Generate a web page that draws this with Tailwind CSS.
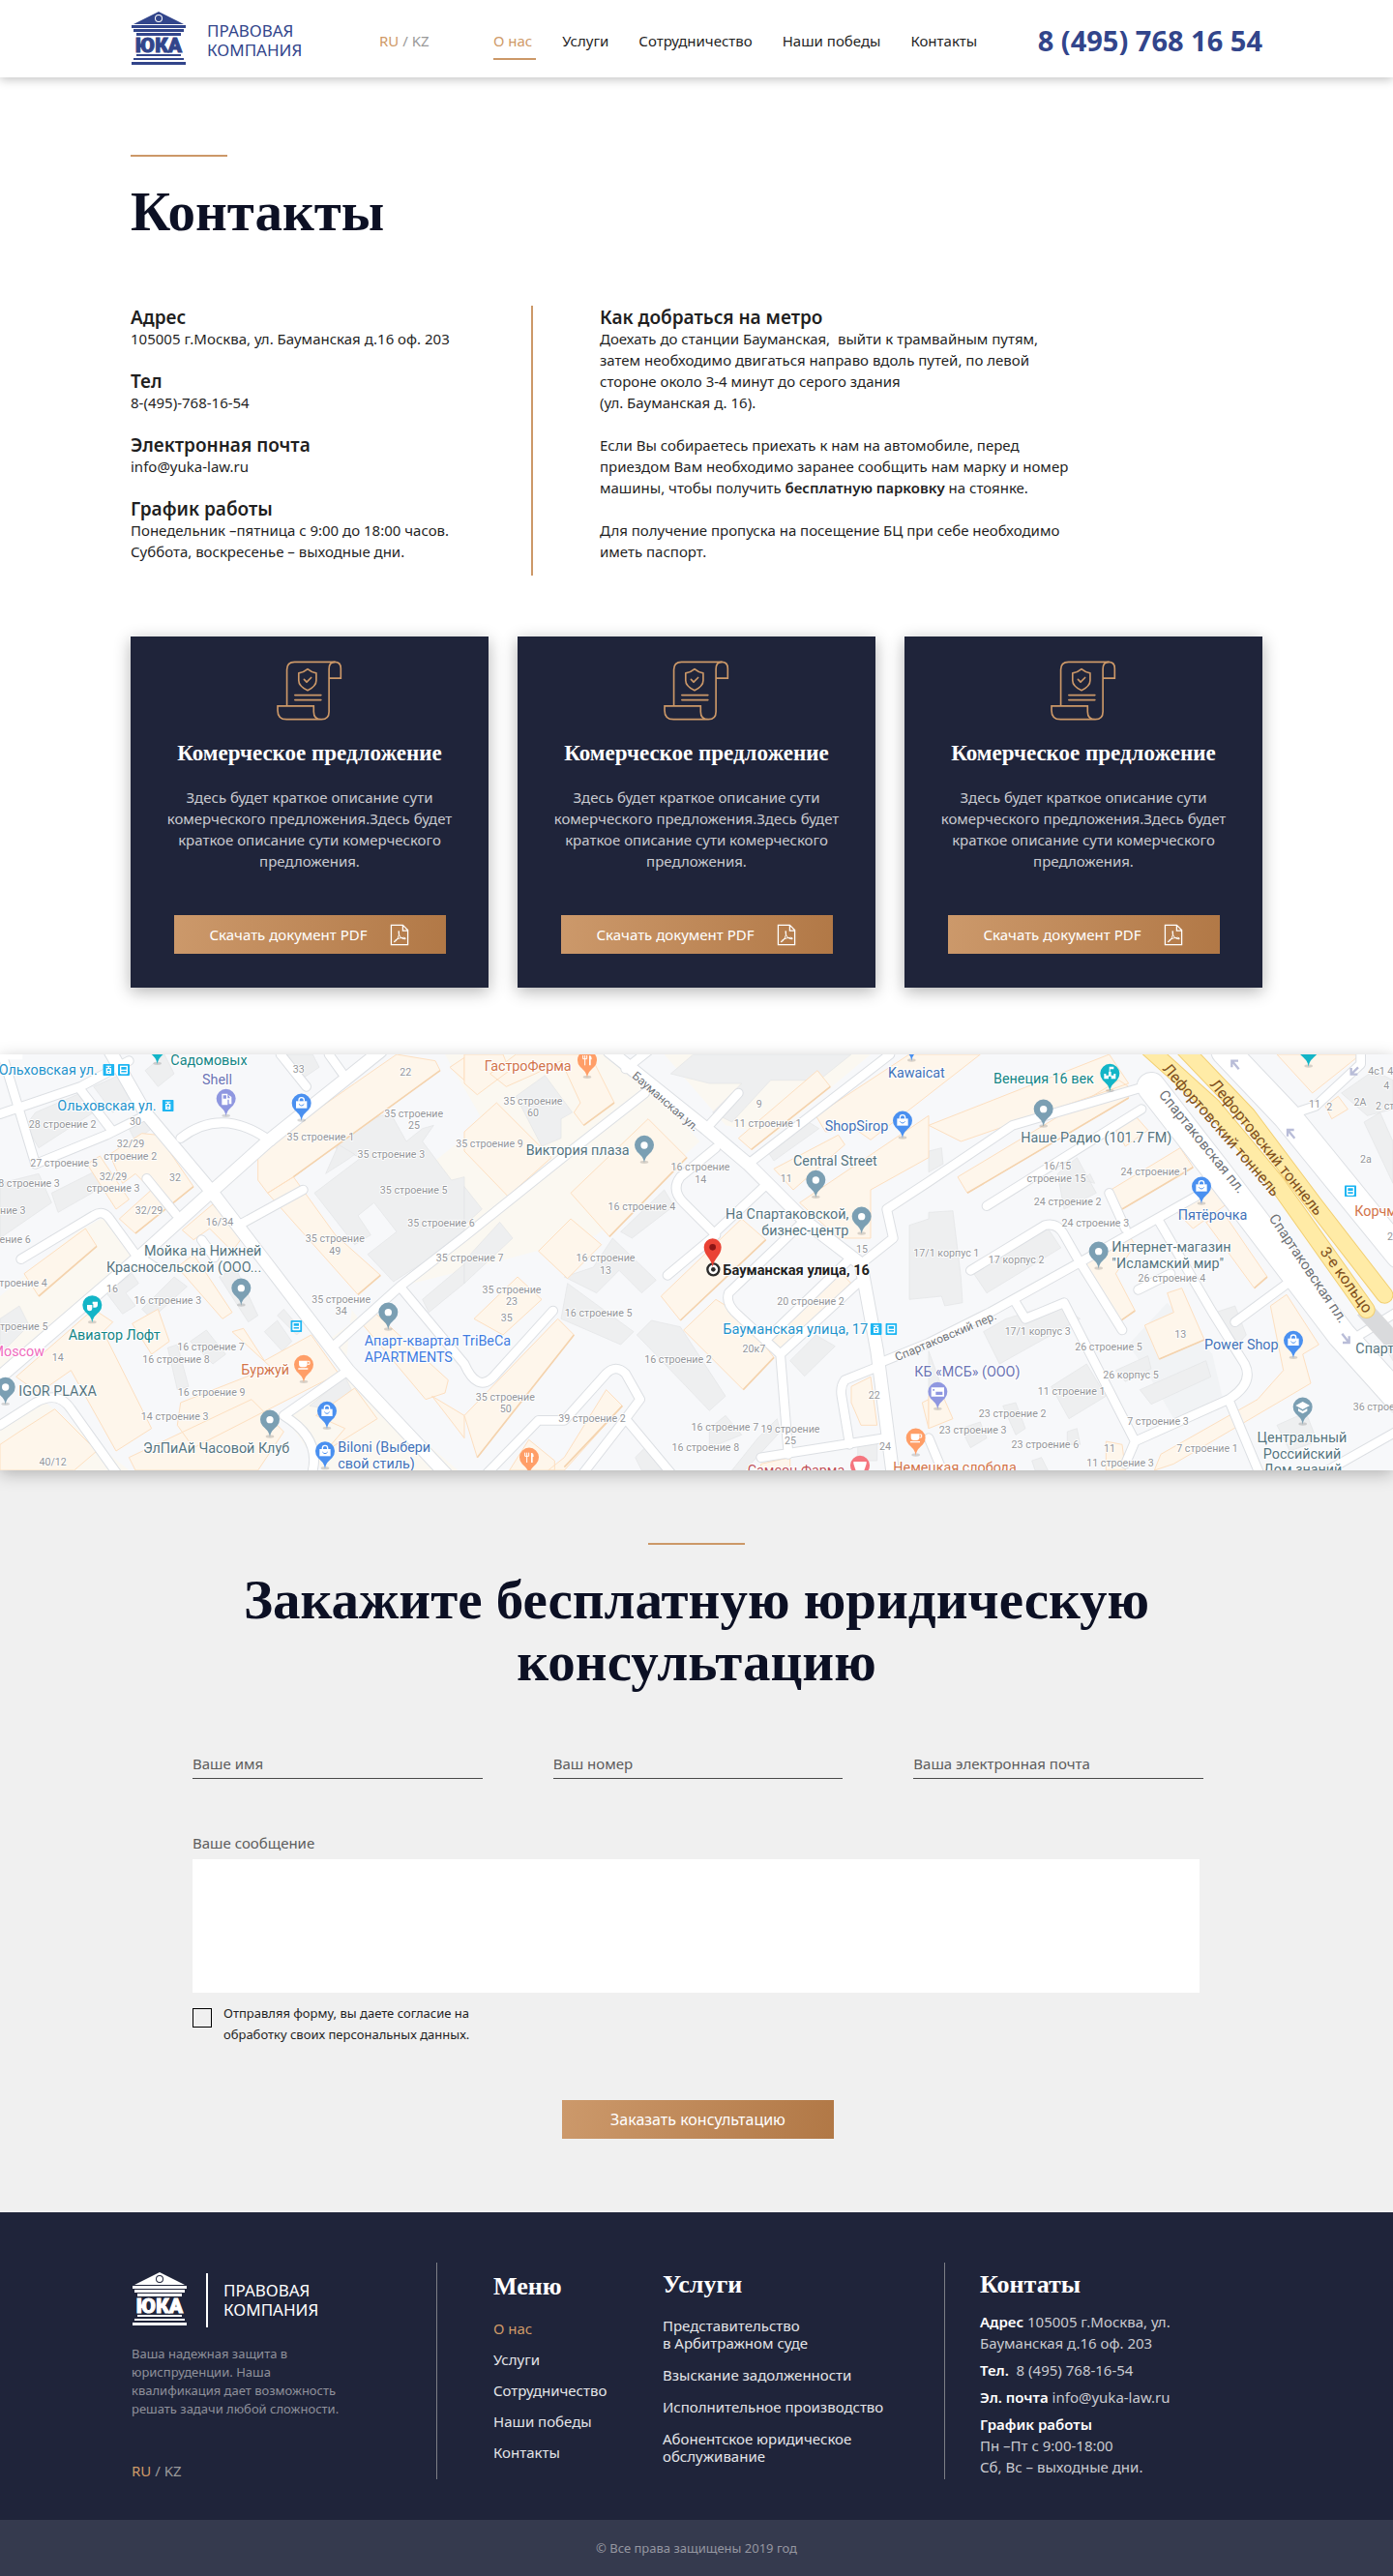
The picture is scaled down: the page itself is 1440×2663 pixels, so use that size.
<!DOCTYPE html>
<html lang="ru">
<head>
<meta charset="utf-8">
<meta name="viewport" content="width=device-width, initial-scale=1">
<title>Контакты — Правовая компания ЮКА</title>
<script src="https://cdn.jsdelivr.net/npm/@tailwindcss/browser@4"></script>
</head>
<body class="bg-white font-['Noto_Sans',sans-serif] text-[15px] leading-[22px] text-[#1f1f1f]">

<!-- shared symbols -->
<svg class="hidden" aria-hidden="true">
  <symbol id="logo" viewBox="0 0 56 55">
    <path fill="currentColor" fill-rule="evenodd" d="M28 0L54 13H2ZM28 3A4 4 0 1 0 28 11A4 4 0 1 0 28 3ZM28 4A3 3 0 1 1 28 10A3 3 0 1 1 28 4Z"/>
    <path fill="currentColor" d="M0 14H56V17H0ZM2 18H54V21H2ZM5 22H51V25H5ZM5 44H51V46H5ZM2 48H54V50H2ZM0 52H56V55H0Z"/>
    <text x="28" y="42" text-anchor="middle" fill="currentColor" stroke="currentColor" stroke-width="1" class="font-[Roboto,sans-serif] text-[21px] font-black">ЮКА</text>
  </symbol>
  <symbol id="scroll" viewBox="498 128 206 188">
    <g fill="none" stroke="#cc9868" stroke-width="5" stroke-linejoin="round" stroke-linecap="round">
      <path d="M530 268V156Q530 132 554 132H680"/>
      <path stroke-linejoin="miter" d="M664 183H699V152Q699 132 680 132Q662 132 662 154V288Q662 312 638 312Q614 312 614 288V270H501V284Q501 312 529 312H638"/>
      <path d="M595 154Q582 165 567 167V190Q567 208 595 221Q622 208 622 190V167Q608 165 595 154Z"/>
      <path d="M584 187L592 195L606 181M555 236H637M555 251H637"/>
    </g>
  </symbol>
  <symbol id="pdf" viewBox="856 943 61 71">
    <g fill="none" stroke="#fff" stroke-width="4">
      <path d="M860 947H897L913 963V1010H860ZM897 947V965H913"/>
      <path stroke-width="3" d="M884 966Q882 976 888 984Q895 992 905 992Q908 988 901 987Q889 987 878 992Q868 998 869 1001Q875 1001 881 989Q888 975 884 966Z"/>
    </g>
  </symbol>
  <symbol id="pin" viewBox="-32 -32 64 90" overflow="visible">
    <ellipse cx="0" cy="52" rx="13" ry="5" fill="#000" opacity=".15"/>
    <path fill="currentColor" d="M0 54C-3 34 -14 29 -22 20A30 30 0 1 1 22 20C14 29 3 34 0 54Z"/>
  </symbol>
  <symbol id="bag" viewBox="-32 -32 64 90" overflow="visible">
    <use href="#pin" x="-32" y="-32" width="64" height="90"/>
    <path fill="#fff" d="M-17 -7H17V15H-17Z"/><path fill="none" stroke="#fff" stroke-width="4" d="M-8 -6V-10A8 8 0 0 1 8 -10V-6"/><path fill="none" stroke="#4a90f0" stroke-width="3" d="M-8 2Q0 12 8 2"/>
  </symbol>
  <symbol id="dot" viewBox="-32 -32 64 90" overflow="visible">
    <use href="#pin" x="-32" y="-32" width="64" height="90"/><circle r="11" fill="#fff"/>
  </symbol>
  <symbol id="fork" viewBox="-32 -32 64 90" overflow="visible">
    <use href="#pin" x="-32" y="-32" width="64" height="90"/>
    <path fill="none" stroke="#fff" stroke-width="3" d="M-13 -15V-4H-1V-15M-7 -15V16"/><path fill="#fff" d="M6 16V-14Q14 -16 14 -2H11V16Z"/>
  </symbol>
  <symbol id="cup" viewBox="-32 -32 64 90" overflow="visible">
    <use href="#pin" x="-32" y="-32" width="64" height="90"/>
    <path fill="#fff" d="M-15 -13H11V-2Q11 7 2 7H-6Q-15 7 -15 -2ZM-17 10H13V14H-17Z"/><path fill="none" stroke="#fff" stroke-width="3" d="M11 -11H18V-2H11"/>
  </symbol>
  <symbol id="stop" viewBox="0 0 36 36">
    <rect width="36" height="36" rx="3" fill="#1fb6f2"/><path fill="none" stroke="#fff" stroke-width="4" d="M8 7H28V28H8ZM8 19H28"/><path fill="#fff" d="M8 26H28V31H8Z"/>
  </symbol>
  <symbol id="tram" viewBox="0 0 36 36">
    <rect width="36" height="36" rx="3" fill="#1fb6f2"/><path fill="#fff" d="M10 5H26V8H20V12H26V30H10V12H16V8H10Z"/><path fill="#1fb6f2" d="M14 16H22V21H14ZM16 24H20V27H16Z"/>
  </symbol>
</svg>

<header class="relative z-10 bg-white px-5 shadow-[0_2px_10px_rgba(0,0,0,0.25)]">
  <div class="mx-auto flex h-20 max-w-[1170px] items-center pt-1">
    <a href="#" class="flex w-[257px] items-center gap-[22px] pl-px text-[17px] leading-5 text-[#32458b]">
      <svg class="mb-1.5 h-[55px] w-14 shrink-0"><use href="#logo"/></svg>
      <span>ПРАВОВАЯ<br>КОМПАНИЯ</span>
    </a>
    <div class="w-[118px] text-[#9a9a9a]"><a href="#" class="text-[#cf9a68]">RU</a> / <a href="#">KZ</a></div>
    <nav class="flex gap-[31px]">
      <a href="#" class="-mr-1 border-b-2 border-[#cc9868] pt-[9px] pr-1 pb-[7px] text-[#cf9a68]">О нас</a>
      <a href="#" class="border-b-2 border-transparent pt-[9px] pb-[7px]">Услуги</a>
      <a href="#" class="border-b-2 border-transparent pt-[9px] pb-[7px]">Сотрудничество</a>
      <a href="#" class="border-b-2 border-transparent pt-[9px] pb-[7px]">Наши победы</a>
      <a href="#" class="border-b-2 border-transparent pt-[9px] pb-[7px]">Контакты</a>
    </nav>
    <a href="tel:+74957681654" class="ml-auto text-[29px] font-bold whitespace-nowrap text-[#32458b]">8 (495) 768 16 54</a>
  </div>
</header>

<main>
  <div class="px-5 pt-20 pb-[69px]">
    <div class="mx-auto max-w-[1170px]">
      <div class="h-0.5 w-[100px] bg-[#cc9868]"></div>
      <h1 class="mt-[25px] font-['Liberation_Serif',serif] text-[57px] leading-16 font-bold text-[#0c1024]">Контакты</h1>

      <section class="mt-[65px] flex">
        <dl class="w-[414px] shrink-0 pt-px">
          <dt class="text-[19px] leading-[22px] font-semibold">Адрес</dt>
          <dd class="mb-[22px]">105005 г.Москва, ул. Бауманская д.16 оф. 203</dd>
          <dt class="text-[19px] leading-[22px] font-semibold">Тел</dt>
          <dd class="mb-[22px]">8-(495)-768-16-54</dd>
          <dt class="text-[19px] leading-[22px] font-semibold">Электронная почта</dt>
          <dd class="mb-[22px]">info@yuka-law.ru</dd>
          <dt class="text-[19px] leading-[22px] font-semibold">График работы</dt>
          <dd>Понедельник –пятница с 9:00 до 18:00 часов.<br>Суббота, воскресенье – выходные дни.</dd>
        </dl>
        <div class="border-l-2 border-[#cc9868] pt-px pb-[14px] pl-[69px]">
          <h2 class="text-[19px] leading-[22px] font-semibold">Как добраться на метро</h2>
          <p>Доехать до станции Бауманская,&nbsp; выйти к трамвайным путям,<br>затем необходимо двигаться направо вдоль путей, по левой<br>стороне около 3-4 минут до серого здания<br>(ул. Бауманская д. 16).</p>
          <p class="mt-[22px]">Если Вы собираетесь приехать к нам на автомобиле, перед<br>приездом Вам необходимо заранее сообщить нам марку и номер<br>машины, чтобы получить <b class="font-semibold">бесплатную парковку</b> на стоянке.</p>
          <p class="mt-[22px]">Для получение пропуска на посещение БЦ при себе необходимо<br>иметь паспорт.</p>
        </div>
      </section>

      <section class="mt-[63px] grid grid-cols-3 gap-[30px] text-center">
        <article class="flex flex-col items-center bg-[#1f243a] px-[35px] pt-[25px] pb-[35px] shadow-[0_4px_16px_rgba(0,0,0,0.3)]">
          <svg class="h-[62px] w-[68px]"><use href="#scroll"/></svg>
          <h3 class="mt-5 font-['Liberation_Serif',serif] text-[23px] leading-7 font-bold whitespace-nowrap text-white">Комерческое предложение</h3>
          <p class="mt-5 text-[#c9cad0]">Здесь будет краткое описание сути комерческого предложения.Здесь будет краткое описание сути комерческого предложения.</p>
          <button type="button" class="mt-[45px] flex h-10 w-[281px] items-center justify-center gap-6 bg-linear-100 from-[#cc996b] to-[#b17846] text-white">Скачать документ PDF <svg class="h-[23px] w-5"><use href="#pdf"/></svg></button>
        </article>
        <article class="flex flex-col items-center bg-[#1f243a] px-[35px] pt-[25px] pb-[35px] shadow-[0_4px_16px_rgba(0,0,0,0.3)]">
          <svg class="h-[62px] w-[68px]"><use href="#scroll"/></svg>
          <h3 class="mt-5 font-['Liberation_Serif',serif] text-[23px] leading-7 font-bold whitespace-nowrap text-white">Комерческое предложение</h3>
          <p class="mt-5 text-[#c9cad0]">Здесь будет краткое описание сути комерческого предложения.Здесь будет краткое описание сути комерческого предложения.</p>
          <button type="button" class="mt-[45px] flex h-10 w-[281px] items-center justify-center gap-6 bg-linear-100 from-[#cc996b] to-[#b17846] text-white">Скачать документ PDF <svg class="h-[23px] w-5"><use href="#pdf"/></svg></button>
        </article>
        <article class="flex flex-col items-center bg-[#1f243a] px-[35px] pt-[25px] pb-[35px] shadow-[0_4px_16px_rgba(0,0,0,0.3)]">
          <svg class="h-[62px] w-[68px]"><use href="#scroll"/></svg>
          <h3 class="mt-5 font-['Liberation_Serif',serif] text-[23px] leading-7 font-bold whitespace-nowrap text-white">Комерческое предложение</h3>
          <p class="mt-5 text-[#c9cad0]">Здесь будет краткое описание сути комерческого предложения.Здесь будет краткое описание сути комерческого предложения.</p>
          <button type="button" class="mt-[45px] flex h-10 w-[281px] items-center justify-center gap-6 bg-linear-100 from-[#cc996b] to-[#b17846] text-white">Скачать документ PDF <svg class="h-[23px] w-5"><use href="#pdf"/></svg></button>
        </article>
      </section>
    </div>
  </div>

  <section class="relative z-10 h-[430px] shadow-[0_4px_16px_rgba(0,0,0,0.25)]" aria-label="Карта">
    <svg class="block h-full w-full bg-[#f7f8fa] font-[Roboto,sans-serif]" viewBox="0 30 4320 1290" preserveAspectRatio="xMidYMid slice" role="img" aria-label="Бауманская улица, 16">
      <!-- commercial ground -->
      <path fill="#fbf8f1" d="M240 580L330 530L420 660L0 1010V780ZM0 1180L130 1100L400 1320H0ZM1180 30H1930L2170 300L1850 590L1440 700L1240 750L1000 930L1060 1010L1420 1320H1000L880 1150L1070 1010ZM2060 30H2700L2400 280L2250 250Z"/>
      <path fill="#f7f8fa" d="M1180 30L830 310L800 440L1120 860L1440 600L1300 400L1500 240L1380 30Z"/>
      <path fill="#f1f3f5" d="M3500 930L3620 800L3760 960L3790 1090L3640 1160L3560 1020Z"/>
      <!-- grey buildings -->
      <g fill="#eeeff0" stroke="#e3e4e6" stroke-width="2">
        <path d="M110 210L250 150L290 210L120 320L80 250ZM290 130L380 90L410 160L350 210ZM390 240L450 210L470 260L420 300ZM860 30H970L990 70L930 110ZM450 80L510 30L540 90L490 130Z"/>
        <path d="M0 430L120 400L160 490L0 600ZM160 460L300 390L320 440L180 520ZM0 850L60 810L90 870L0 960ZM330 770L410 710L430 740L390 770L420 810L380 835ZM440 820L540 720L580 750L470 850Z"/>
        <path d="M680 720L730 690L800 840L770 860ZM820 890L860 855L905 920L875 950ZM860 840L880 820L935 885L920 900ZM590 920L640 885L700 960L660 990ZM520 940L550 930L585 1060L550 1070ZM960 1120L1070 1030L1090 1070L1020 1130Z"/>
        <path d="M975 460L1120 350L1040 320L1130 240L1210 210L1260 300L1310 260L1345 250L1310 300L1400 420L1440 410V600L1290 690L1220 735L1140 650L1230 580L1160 490L1110 530L1150 590L1100 620ZM1310 790L1440 680V740L1330 830Z"/>
        <path d="M1600 160L1690 95L1775 210L1740 230L1740 290L1680 315ZM1440 440L1495 510L1440 560ZM1440 670L1550 550L1590 600L1440 740ZM1840 690L1900 600L2035 730L1990 770L1920 700L1850 770L1750 720ZM1760 740L1965 890L1925 930L1740 850ZM1975 900L2020 855L2110 875L2250 1090L2200 1135ZM1925 580L2060 450L2090 500L1960 600Z"/>
        <path d="M2080 90L2150 30H2640L2540 110L2480 110L2390 110L2270 240L2210 210L2300 120L2200 120ZM2380 330L2500 235L2540 260L2400 360ZM2450 980L2530 900L2590 935L2495 1028ZM2200 1190L2250 1150L2300 1210L2200 1250ZM2350 1220L2410 1160L2420 1200L2310 1320H2270ZM2660 1220H2720V1290H2660ZM1970 1280L2010 1240L2060 1320H1990Z"/>
        <path d="M2880 330L2920 320L2925 370L2880 395ZM2820 560L2880 540V520L2955 515L2980 720L2985 800L2930 810L2920 780L2820 790ZM3020 710L3250 570L3290 630L3060 770ZM3050 890L3120 850L3280 800L3350 850L3100 990ZM3280 400L3340 350L3400 460L3300 510ZM3360 420L3380 400L3395 430ZM3260 1060L3370 990L3430 1090L3315 1160ZM3460 1010L3560 965L3570 1005L3490 1045ZM3535 1070L3740 980L3755 1030L3570 1115ZM3770 830L3830 810L3865 900L3830 940ZM3960 1180L4050 1140L4085 1230L4000 1260Z"/>
        <path d="M4160 150L4260 80L4320 110V200L4240 220ZM4230 240L4280 210L4320 300V430ZM3110 1120L3150 1110L3180 1190L3150 1210ZM2980 1190L3040 1170L3060 1220L3010 1250ZM3310 1200L3340 1190L3350 1240L3310 1240ZM3200 1290L3230 1280L3250 1320H3210ZM2880 950L2920 1060L2880 1120ZM4290 930L4320 900V980ZM1010 400L1050 310L1100 340L1080 355Z"/>
      </g>
      <!-- orange buildings -->
      <g fill="#fef6eb" stroke="#fddfc0" stroke-width="3">
        <path d="M1100 120L1230 30L1350 50L1365 80L910 410L830 460L800 420V330ZM830 460L910 410L1040 590L1180 715L1110 775ZM340 340L440 275L490 280L600 440L420 585L370 540L470 450L420 400L380 430ZM270 370L310 345L400 480L360 510ZM565 575L660 495L750 600L720 640L650 570L600 605ZM550 690L600 650L720 830L690 850Z"/>
        <path d="M75 710L265 570L300 625L120 780ZM50 1030L290 820L350 860L320 890L470 1190L360 1260L220 1010L120 1080ZM410 865L490 820L525 920L470 960ZM720 890L755 880L820 980L965 900L1050 1020L600 1250L550 1180L560 1110L840 1000ZM60 1200L170 1130L300 1260L230 1320H0V1240ZM980 1150L1100 1065L1170 1160L1010 1260L1070 1190ZM400 1280L780 1100L880 1200L800 1320H420ZM1110 850L1150 820L1390 1040L1380 1080L1320 1100ZM1395 70L1440 40V110ZM1440 1220L1340 1090L1440 1150Z"/>
        <path d="M1440 30H1560L1580 80L1480 155L1440 120ZM1440 270L1540 180L1710 350L1575 470L1440 330ZM1770 460L2010 230L2130 350L1890 595ZM1670 640L1770 540L1865 620L1760 725ZM1470 850L1605 720L1680 790L1560 900ZM1520 90L1600 30H1830L1905 180L1810 250L1780 210L1800 180L1740 50L1660 90L1570 130ZM1440 1150L1730 850L1780 900L1480 1280ZM1750 1280L1880 1070L1930 1120L1750 1320H1700ZM1580 1320L1640 1225L1720 1290V1320Z"/>
        <path d="M2050 780L2300 540L2375 605L2110 855ZM2120 885L2220 790L2300 840L2400 970L2305 1070ZM2380 910L2600 700L2640 740L2420 960ZM2290 290L2535 80L2575 130L2330 325ZM2400 385L2600 280L2620 310L2460 450ZM2480 490L2880 220V350L2700 450L2700 600L2600 600ZM2530 220L2820 30H3040L2700 295L2650 260L2560 270ZM2640 1060L2700 1030L2720 1180L2670 1180L2640 1110ZM2860 1110L2880 1100V1190ZM2360 1300L2450 1280V1320H2360Z"/>
        <path d="M2880 250L3440 30L3500 120L2980 300ZM2970 410L3470 110L3500 130L3500 165L3000 460ZM3455 255L3520 220L3560 265L3490 315ZM3445 450L3660 320L3700 380L3480 510ZM3350 680L3380 650L3500 590L3520 620L3460 710L3520 825L3470 860ZM3640 510L3770 420L3810 490L3700 570ZM3740 550L3800 530L3930 720L3890 755ZM3550 870L3640 830L3620 770L3665 755L3735 915L3595 975ZM3940 810L3990 775L4090 930L4040 960L4065 1050L3640 1300L3580 1320L3600 1270L3900 1100L3980 1010ZM2880 1090L2920 1080L2955 1160L2880 1190ZM3430 1230L3480 1240L3490 1320H3430ZM3960 30H4220L4070 150ZM4110 190L4150 160L4180 200L4130 230Z"/>
      </g>
      <g fill="none" stroke="#f4d3ae" stroke-width="5">
        <path d="M1365 80L910 410M1180 715L1110 775M600 440L420 585M300 625L120 780M2130 350L1890 595M1905 180L1810 250M1780 900L1480 1280M1930 1120L1750 1310M2375 605L2110 855M2400 970L2305 1070M2640 740L2420 960M3500 165L3000 460M3700 380L3480 510M3520 825L3470 860M3930 720L3890 755M3735 915L3595 975M2575 130L2330 325"/>
      </g>
      <!-- streets: casing, then surface -->
      <g fill="none" stroke="#dcdfe3" stroke-linecap="round" stroke-linejoin="round">
        <path stroke-width="44" d="M330 0L450 210L660 460L1080 1010L1400 1350M0 1030L430 660L640 470L830 300L1180 20M1890 20L2190 260L2320 370L2500 550L2670 680L2720 950L2770 1340"/>
        <path stroke-width="32" d="M0 215L250 130L400 50M10 40L110 370L330 280L450 220M250 140L350 270M560 290Q690 190 840 300M65 665L290 530Q320 510 340 540L420 650L480 690M740 560L940 450M1040 930L1240 750L1440 595L1770 330L2000 150M1240 750L1440 990Q1480 1080 1530 1030L1715 825M880 1150L1080 1010M880 1150Q1010 1230 960 1350M0 1180L110 1110Q180 1070 220 1130L370 1340M455 415L545 525M625 605L665 660M870 30L950 130M1020 30L1070 100"/>
        <path stroke-width="32" d="M1940 75L2010 20M2190 260L2290 150M2220 320L2110 410Q2080 450 2120 490L2220 590L2070 715M2220 580L2370 440M2320 370L2540 200L2760 30M2490 550L2260 770Q2250 800 2280 830L2420 960L2445 1270M2420 960L2660 740M2380 910L2640 660M2670 680L2770 600L2750 510L2880 425L3140 250L3550 130M2720 1000L2620 1040Q2605 1060 2610 1090L2635 1240M2360 1280L2740 1220M2720 990L2880 925L3070 830L3340 680L3710 470M1500 1340L1670 1165H1750L1880 1020Q1910 990 1940 1020L1985 1100L1940 1160L1800 1340M1940 1160L2090 1340"/>
        <path stroke-width="32" d="M3060 500L3540 200M3010 700L3240 560Q3280 550 3300 590L3340 660L3480 885M3150 800L3180 850L3300 800L3520 1230L3810 1100Q3890 1050 3860 990L3760 830L3590 540M3440 460L3490 570M3530 760L3630 710M3830 860L4020 720M4200 910L4330 830M3810 1100L3910 1340M3520 1230L3490 1300M3990 220L4080 190L4220 60V20M4100 1330L4330 1200M2880 1220L2930 1340"/>
        <path stroke-width="92" d="M3570 130L3780 400L4160 900L4340 1100M3800 20L3990 220L4340 650"/>
      </g>
      <g fill="none" stroke="#fff" stroke-linecap="round" stroke-linejoin="round">
        <path stroke-width="38" d="M330 0L450 210L660 460L1080 1010L1400 1350M0 1030L430 660L640 470L830 300L1180 20M1890 20L2190 260L2320 370L2500 550L2670 680L2720 950L2770 1340"/>
        <path stroke-width="26" d="M0 215L250 130L400 50M10 40L110 370L330 280L450 220M250 140L350 270M560 290Q690 190 840 300M65 665L290 530Q320 510 340 540L420 650L480 690M740 560L940 450M1040 930L1240 750L1440 595L1770 330L2000 150M1240 750L1440 990Q1480 1080 1530 1030L1715 825M880 1150L1080 1010M880 1150Q1010 1230 960 1350M0 1180L110 1110Q180 1070 220 1130L370 1340M455 415L545 525M625 605L665 660M870 30L950 130M1020 30L1070 100"/>
        <path stroke-width="26" d="M1940 75L2010 20M2190 260L2290 150M2220 320L2110 410Q2080 450 2120 490L2220 590L2070 715M2220 580L2370 440M2320 370L2540 200L2760 30M2490 550L2260 770Q2250 800 2280 830L2420 960L2445 1270M2420 960L2660 740M2380 910L2640 660M2670 680L2770 600L2750 510L2880 425L3140 250L3550 130M2720 1000L2620 1040Q2605 1060 2610 1090L2635 1240M2360 1280L2740 1220M2720 990L2880 925L3070 830L3340 680L3710 470M1500 1340L1670 1165H1750L1880 1020Q1910 990 1940 1020L1985 1100L1940 1160L1800 1340M1940 1160L2090 1340"/>
        <path stroke-width="26" d="M3060 500L3540 200M3010 700L3240 560Q3280 550 3300 590L3340 660L3480 885M3150 800L3180 850L3300 800L3520 1230L3810 1100Q3890 1050 3860 990L3760 830L3590 540M3440 460L3490 570M3530 760L3630 710M3830 860L4020 720M4200 910L4330 830M3810 1100L3910 1340M3520 1230L3490 1300M3990 220L4080 190L4220 60V20M4100 1330L4330 1200M2880 1220L2930 1340"/>
        <path stroke-width="86" d="M3570 130L3780 400L4160 900L4340 1100M3800 20L3990 220L4340 650"/>
      </g>
      <path fill="none" stroke="#d9dadc" stroke-width="56" d="M4230 820L4330 930"/>
      <g fill="none" stroke-linecap="round" stroke-linejoin="round">
        <path stroke="#f2cf72" stroke-width="54" d="M3560 10L3760 190L3960 430L4238 822M3660 0L3870 220L4080 500L4294 776"/>
        <path stroke="#ffeba6" stroke-width="48" d="M3560 10L3760 190L3960 430L4238 822M3660 0L3870 220L4080 500L4294 776"/>
      </g>
      <g fill="none" stroke="#b9bdd8" stroke-width="7">
        <path d="M3842 76L3822 52M3820 70V50H3840M4015 290L3995 266M3993 284V264H4013M4162 896L4182 922M4184 904V924H4164M4212 70L4192 90M4190 72V92H4210"/>
      </g>
      <path fill="#fff" d="M0 30H70V46H0Z"/>

      <!-- house numbers -->
      <g class="fill-[#94969a] stroke-white text-[32px] [paint-order:stroke]" stroke-width="5" text-anchor="middle">
        <text x="194" y="258">28 строение 2</text><text x="420" y="248">30</text><text x="405" y="318">32/29</text><text x="404" y="356">строение 2</text>
        <text x="198" y="379">27 строение 5</text><text x="351" y="419">32/29</text><text x="351" y="457">строение 3</text><text x="543" y="423">32</text>
        <text x="90" y="442">8 строение 3</text><text x="40" y="524">ние 3</text><text x="47" y="615">ение 6</text><text x="462" y="524">32/29</text><text x="681" y="562">16/34</text>
        <text x="72" y="749">троение 4</text><text x="348" y="768">16</text><text x="520" y="803">16 строение 3</text><text x="74" y="885">троение 5</text><text x="179" y="980">14</text>
        <text x="654" y="948">16 строение 7</text><text x="546" y="986">16 строение 8</text><text x="656" y="1088">16 строение 9</text><text x="542" y="1163">14 строение 3</text><text x="164" y="1305">40/12</text>
        <text x="926" y="87">33</text><text x="1258" y="97">22</text><text x="1283" y="224">35 строение</text><text x="1284" y="261">25</text><text x="994" y="296">35 строение 1</text><text x="1213" y="350">35 строение 3</text>
        <text x="1283" y="461">35 строение 5</text><text x="1368" y="565">35 строение 6</text><text x="1039" y="613">35 строение</text><text x="1039" y="650">49</text><text x="1457" y="673">35 строение 7</text><text x="1058" y="800">35 строение</text><text x="1058" y="837">34</text>
        <text x="1653" y="185">35 строение</text><text x="1653" y="223">60</text><text x="1518" y="318">35 строение 9</text><text x="2354" y="194">9</text><text x="2381" y="255">11 строение 1</text><text x="2172" y="391">16 строение</text><text x="2173" y="428">14</text>
        <text x="2438" y="425">11</text><text x="1990" y="514">16 строение 4</text><text x="1878" y="673">16 строение</text><text x="1878" y="710">13</text><text x="1587" y="770">35 строение</text><text x="1587" y="808">23</text><text x="1571" y="859">35</text><text x="1856" y="843">16 строение 5</text>
        <text x="2514" y="808">20 строение 2</text><text x="2338" y="954">20к7</text><text x="2103" y="986">16 строение 2</text><text x="1567" y="1103">35 строение</text><text x="1568" y="1140">50</text><text x="1836" y="1169">39 строение 2</text>
        <text x="2248" y="1198">16 строение 7</text><text x="2451" y="1202">19 строение</text><text x="2451" y="1239">25</text><text x="2188" y="1261">16 строение 8</text><text x="2711" y="1097">22</text><text x="2745" y="1258">24</text><text x="2673" y="644">15</text>
        <text x="3279" y="388">16/15</text><text x="3276" y="425">строение 15</text><text x="3311" y="499">24 строение 2</text><text x="3397" y="565">24 строение 3</text><text x="3580" y="404">24 строение 1</text><text x="2935" y="656">17/1 корпус 1</text><text x="3152" y="679">17 корпус 2</text>
        <text x="3634" y="736">26 строение 4</text><text x="3661" y="910">13</text><text x="3218" y="900">17/1 корпус 3</text><text x="3438" y="948">26 строение 5</text><text x="3507" y="1036">26 корпус 5</text><text x="3323" y="1085">11 строение 1</text>
        <text x="3140" y="1154">23 строение 2</text><text x="3017" y="1207">23 строение 3</text><text x="3241" y="1252">23 строение 6</text><text x="3591" y="1179">7 строение 3</text><text x="3441" y="1264">11</text><text x="3474" y="1308">11 строение 3</text><text x="3744" y="1264">7 строение 1</text>
        <text x="4269" y="94">4с1</text><text x="4312" y="94">4</text><text x="4300" y="137">4</text><text x="4077" y="195">11</text><text x="4123" y="204">2</text><text x="4218" y="189">2А</text><text x="4266" y="201" text-anchor="start">2 строение</text><text x="4236" y="366">2а</text><text x="4311" y="605">2</text><text x="4196" y="1135" text-anchor="start">36 строение</text>
      </g>

      <!-- street names -->
      <g class="fill-[#6f7378] stroke-white text-[36px] [paint-order:stroke]" stroke-width="5">
        <text transform="translate(1958 100) rotate(41)">Бауманская ул.</text>
        <text transform="translate(2782 982) rotate(-23)">Спартаковский пер.</text>
        <text transform="translate(3592 156) rotate(51)" class="text-[45px]">Спартаковская пл.</text>
        <text transform="translate(3934 538) rotate(56)" class="text-[45px]">Спартаковская пл.</text>
      </g>
      <g class="fill-[#80501c] text-[48px]">
        <text transform="translate(3603 76) rotate(49)">Лефортовский тоннель</text>
        <text transform="translate(3750 124) rotate(51)">Лефортовский тоннель</text>
        <text transform="translate(4092 642) rotate(54)">3-е кольцо</text>
      </g>

      <!-- places -->
      <g class="stroke-white text-[43px] [paint-order:stroke]" stroke-width="6">
        <g class="fill-[#1f93cc]">
          <text x="-4" y="93">Ольховская ул.</text><text x="178" y="203">Ольховская ул.</text><text x="2242" y="896" class="text-[44px]">Бауманская улица, 17</text>
        </g>
        <g class="fill-[#128585]">
          <text x="529" y="64">Садомовых</text><text x="212" y="915">Авиатор Лофт</text><text x="3081" y="120">Венеция 16 век</text>
        </g>
        <g class="fill-[#6b74b5]"><text x="627" y="123">Shell</text><text x="2836" y="1028">КБ «МСБ» (ООО)</text></g>
        <g class="fill-[#567580]">
          <text x="447" y="655">Мойка на Нижней</text><text x="330" y="706">Красносельской (ООО...</text><text x="58" y="1088">IGOR PLAXA</text><text x="444" y="1266">ЭлПиАй Часовой Клуб</text>
          <text x="1631" y="342">Виктория плаза</text><text x="2460" y="374">Central Street</text><text x="2632" y="539" text-anchor="end">На Спартаковской,</text><text x="2632" y="590" text-anchor="end">бизнес-центр</text>
          <text x="3166" y="304">Наше Радио (101.7 FM)</text><text x="3448" y="643">Интернет-магазин</text><text x="3448" y="693">"Исламский мир"</text><text x="4204" y="956">Спартаковская</text>
          <text x="4038" y="1232" text-anchor="middle">Центральный</text><text x="4038" y="1283" text-anchor="middle">Российский</text><text x="4040" y="1333" text-anchor="middle">Дом знаний</text>
        </g>
        <g class="fill-[#3f7cdf]"><text x="1130" y="934">Апарт-квартал TriBeCa</text><text x="1130" y="984">APARTMENTS</text></g>
        <g class="fill-[#4272b8]">
          <text x="1048" y="1263">Biloni (Выбери</text><text x="1048" y="1313">свой стиль)</text><text x="2754" y="102">Kawaicat</text><text x="2558" y="266">ShopSirop</text><text x="3653" y="544">Пятёрочка</text><text x="3735" y="946">Power Shop</text>
        </g>
        <g class="fill-[#d2744a]">
          <text x="748" y="1022">Буржуй</text><text x="1502" y="80">ГастроФерма</text><text x="2770" y="1327">Немецкая слобода</text><text x="4201" y="532">Корчма</text>
        </g>
        <text x="2318" y="1334" class="fill-[#c0535b]">Самсон Фарма</text>
        <text x="138" y="966" text-anchor="end" class="fill-[#f06cbd]">Moscow</text>
        <text x="2242" y="713" class="fill-[#222] text-[44px] font-bold">Бауманская улица, 16</text>
      </g>

      <!-- stops -->
      <g>
        <use href="#tram" x="319" y="60" width="36" height="36"/><use href="#stop" x="366" y="60" width="36" height="36"/><use href="#tram" x="503" y="171" width="36" height="36"/><use href="#stop" x="901" y="855" width="36" height="36"/>
        <use href="#tram" x="2699" y="864" width="36" height="36"/><use href="#stop" x="2746" y="864" width="36" height="36"/><use href="#stop" x="4170" y="436" width="36" height="36"/>
      </g>

      <!-- pins, x/y is the head's centre minus 32 -->
      <g class="text-[#7b9fb3]">
        <use href="#dot" x="716" y="723" width="64" height="90"/><use href="#dot" x="1172" y="798" width="64" height="90"/><use href="#dot" x="-15" y="1030" width="64" height="90"/><use href="#dot" x="805" y="1131" width="64" height="90"/>
        <use href="#dot" x="1966" y="280" width="64" height="90"/><use href="#dot" x="2498" y="388" width="64" height="90"/><use href="#dot" x="2640" y="501" width="64" height="90"/><use href="#dot" x="3204" y="168" width="64" height="90"/><use href="#dot" x="3375" y="609" width="64" height="90"/>
        <use href="#pin" x="4008" y="1092" width="64" height="90"/>
        <path fill="#fff" d="M4040 1107L4062 1119L4040 1131L4018 1119ZM4026 1128L4040 1136L4054 1128V1136L4040 1144L4026 1136Z"/>
      </g>
      <g class="text-[#4a90f0]">
        <use href="#bag" x="903" y="150" width="64" height="90"/><use href="#bag" x="982" y="1105" width="64" height="90"/><use href="#bag" x="976" y="1229" width="64" height="90"/><use href="#bag" x="2767" y="204" width="64" height="90"/>
        <use href="#bag" x="3694" y="408" width="64" height="90"/><use href="#bag" x="3979" y="886" width="64" height="90"/><use href="#pin" x="2795" y="-36" width="64" height="90"/>
      </g>
      <g class="text-[#13b5c7]">
        <use href="#pin" x="456" y="-26" width="64" height="90"/><use href="#pin" x="254" y="776" width="64" height="90"/><use href="#pin" x="3410" y="58" width="64" height="90"/><use href="#pin" x="4026" y="-18" width="64" height="90"/>
        <path fill="#fff" d="M270 807H286V817Q286 826 278 826Q270 826 270 817ZM287 797H303V806Q303 815 295 815H289V804H287ZM3424 106V90H3430V95H3438V84H3440V68H3454V76H3443V84H3446V95H3454V90H3460V106H3446V98H3438V106Z"/>
      </g>
      <g class="text-[#8f97e0]">
        <use href="#pin" x="669" y="136" width="64" height="90"/><use href="#pin" x="2876" y="1045" width="64" height="90"/>
        <path fill="#fff" fill-rule="evenodd" d="M688 152H706V187H688ZM692 157V167H702V157ZM708 155L718 162V184H710V170H706V166H713V164ZM2888 1063H2928V1091H2888ZM2893 1068V1073H2898V1068ZM2902 1076V1086H2923V1076Z"/>
      </g>
      <g class="text-[#ff9e67]">
        <use href="#cup" x="910" y="961" width="64" height="90"/><use href="#fork" x="1789" y="16" width="64" height="90"/><use href="#fork" x="1609" y="1248" width="64" height="90"/><use href="#cup" x="2808" y="1188" width="64" height="90"/>
      </g>
      <use href="#pin" x="2635" y="1273" width="64" height="90" class="text-[#f5767f]"/>
      <path fill="#fff" d="M2647 1293H2687V1299Q2684 1310 2680 1320H2654Q2650 1310 2647 1299Z"/>

      <!-- selected address -->
      <circle cx="2212" cy="697" r="18" fill="#fff" stroke="#2b2b2b" stroke-width="7"/><circle cx="2212" cy="697" r="7" fill="#2b2b2b"/>
      <path fill="#ea4335" d="M2210 690C2207 664 2183 654 2183 628A27 27 0 1 1 2237 628C2237 654 2213 664 2210 690Z"/><circle cx="2210" cy="628" r="10" fill="#8c1515"/>
    </svg>
  </section>

  <section class="bg-[#f0f0f0] px-5 pt-[75px] pb-[76px]">
    <div class="mx-auto h-0.5 w-[100px] bg-[#cc9868]"></div>
    <h2 class="mt-[25px] text-center font-['Liberation_Serif',serif] text-[57px] leading-16 font-bold text-[#0c1024]">Закажите бесплатную юридическую<br>консультацию</h2>
    <form class="mx-auto mt-[62px] max-w-[1048px] pl-[3px]">
      <div class="grid grid-cols-3 gap-[73px]">
        <div>
          <label for="name" class="sr-only">Ваше имя</label>
          <input id="name" type="text" placeholder="Ваше имя" class="block w-full border-b border-[#4a4a4a] pb-1 leading-[22px] outline-none placeholder:text-[#5c5c5c]">
        </div>
        <div>
          <label for="phone" class="sr-only">Ваш номер</label>
          <input id="phone" type="tel" placeholder="Ваш номер" class="block w-full border-b border-[#4a4a4a] pb-1 leading-[22px] outline-none placeholder:text-[#5c5c5c]">
        </div>
        <div>
          <label for="email" class="sr-only">Ваша электронная почта</label>
          <input id="email" type="email" placeholder="Ваша электронная почта" class="block w-full border-b border-[#4a4a4a] pb-1 leading-[22px] outline-none placeholder:text-[#5c5c5c]">
        </div>
      </div>
      <label for="message" class="mt-[55px] block text-[#5c5c5c]">Ваше сообщение</label>
      <textarea id="message" class="mt-1.5 block h-[138px] w-[calc(100%-4px)] resize-none bg-white p-3 outline-none"></textarea>
      <div class="mt-2.5 flex items-start gap-3">
        <input id="agree" type="checkbox" class="mt-1.5 size-5 shrink-0 appearance-none border border-black checked:bg-[#cc9868]">
        <label for="agree" class="text-[13px] leading-[22px]">Отправляя форму, вы даете согласие на<br>обработку своих персональных данных.</label>
      </div>
      <button type="submit" class="mx-auto mt-[57px] block h-10 w-[281px] bg-linear-100 from-[#cc996b] to-[#b17846] text-base text-white">Заказать консультацию</button>
    </form>
  </section>
</main>

<footer class="bg-[#1f243a] text-[#e4e5e8]">
  <div class="px-5 pt-[52px] pb-10">
    <div class="mx-auto flex max-w-[1170px] items-start">
      <div class="w-[316px] shrink-0 pt-[11px] pl-px">
        <a href="#" class="flex h-14 items-center pl-px text-[17px] leading-5 text-white">
          <svg class="mb-1 h-[55px] w-14"><use href="#logo"/></svg>
          <span class="ml-5 h-14 w-0.5 bg-white"></span>
          <span class="ml-4">ПРАВОВАЯ<br>КОМПАНИЯ</span>
        </a>
        <p class="mt-[18px] text-[13px] leading-[19px] text-[#8f919b]">Ваша надежная защита в<br>юриспруденции. Наша<br>квалификация дает возможность<br>решать задачи любой сложности.</p>
        <div class="mt-[43px] text-[#9a9a9a]"><a href="#" class="text-[#cf9a68]">RU</a> / <a href="#">KZ</a></div>
      </div>
      <nav class="flex h-56 w-[526px] shrink-0 border-x border-[#7d7f86] pl-[58px]">
        <div class="w-[175px] pt-[9px]">
          <h3 class="font-['Liberation_Serif',serif] text-[26px] leading-8 font-bold text-white">Меню</h3>
          <ul class="mt-4 flex flex-col gap-2.5">
            <li><a href="#" class="text-[#cf9a68]">О нас</a></li>
            <li><a href="#">Услуги</a></li>
            <li><a href="#">Сотрудничество</a></li>
            <li><a href="#">Наши победы</a></li>
            <li><a href="#">Контакты</a></li>
          </ul>
        </div>
        <div class="pt-[7px]">
          <h3 class="font-['Liberation_Serif',serif] text-[26px] leading-8 font-bold text-white">Услуги</h3>
          <ul class="mt-[17px] flex flex-col gap-[15px] leading-[18px]">
            <li><a href="#">Представительство<br>в Арбитражном суде</a></li>
            <li><a href="#">Взыскание задолженности</a></li>
            <li><a href="#">Исполнительное производство</a></li>
            <li><a href="#">Абонентское юридическое<br>обслуживание</a></li>
          </ul>
        </div>
      </nav>
      <div class="pt-[7px] pl-9 text-[#c9cad0]">
        <h3 class="font-['Liberation_Serif',serif] text-[26px] leading-8 font-bold text-white">Контаты</h3>
        <div class="mt-[11px] flex flex-col gap-1.5">
          <p><b class="font-semibold text-white">Адрес</b> 105005 г.Москва, ул.<br>Бауманская д.16 оф. 203</p>
          <p><b class="font-semibold text-white">Тел.</b>&nbsp; 8 (495) 768-16-54</p>
          <p><b class="font-semibold text-white">Эл. почта</b> info@yuka-law.ru</p>
          <p><b class="font-semibold text-white">График работы</b><br>Пн –Пт с 9:00-18:00<br>Сб, Вс – выходные дни.</p>
        </div>
      </div>
    </div>
  </div>
  <div class="bg-[#353a4e] py-[18px] text-center text-[13px] leading-[22px] text-[#9597a1]">© Все права защищены 2019 год</div>
</footer>
</body>
</html>
